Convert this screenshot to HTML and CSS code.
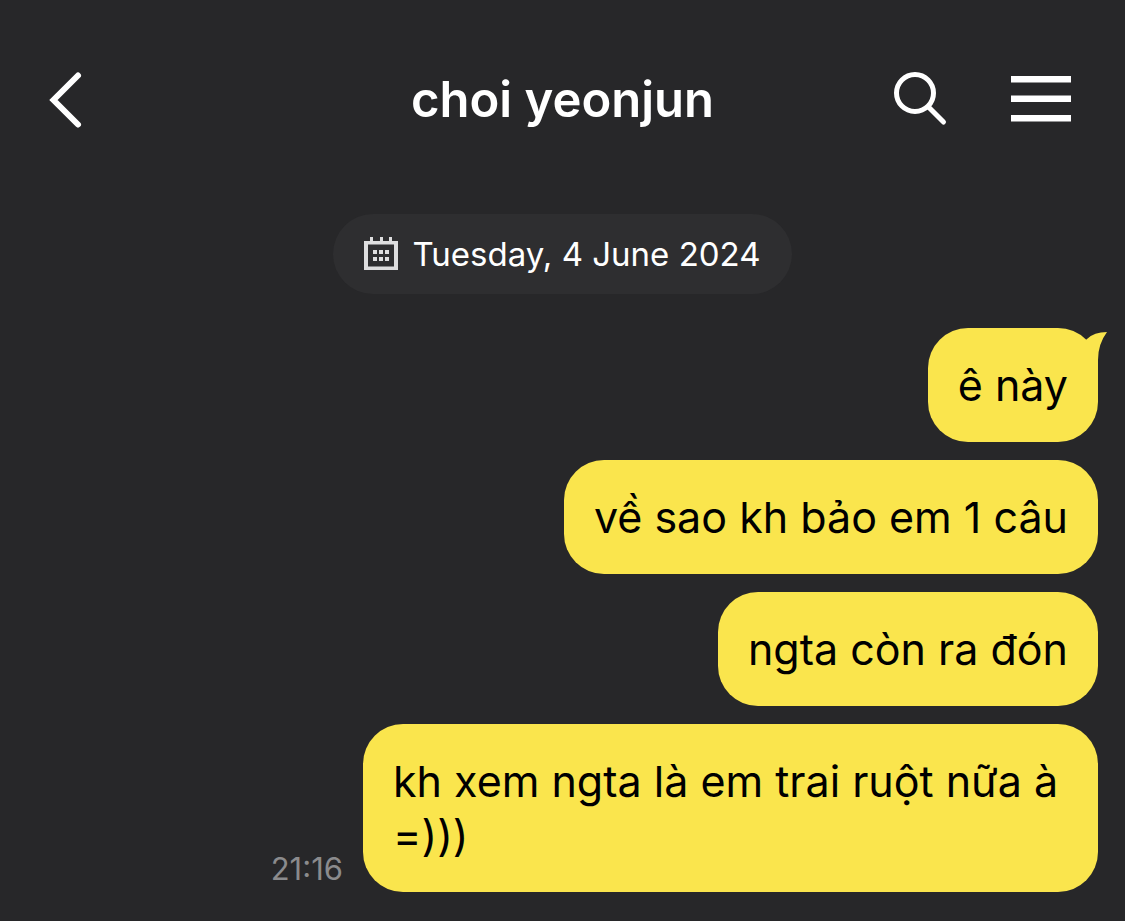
FILE: index.html
```html
<!DOCTYPE html>
<html lang="vi">
<head>
  <meta charset="utf-8">
  <meta name="viewport" content="width=device-width, initial-scale=1">
  <title>choi yeonjun</title>
  <link rel="stylesheet" href="styles.css">
</head>
<body>
  <header class="topbar">
    <button class="icon-button" type="button" aria-label="Back">
      <svg width="36" height="60" viewBox="0 0 36 60" fill="none" stroke="currentColor" stroke-width="6" stroke-linecap="round"><path d="M30 5.500 5.500 30 30 54.500"/></svg>
    </button>
    <h1 class="title">choi yeonjun</h1>
    <div class="actions">
      <button class="icon-button" type="button" aria-label="Search">
        <svg width="56" height="56" viewBox="0 0 56 56" fill="none" stroke="currentColor" stroke-width="5" stroke-linecap="round"><circle cx="22" cy="21" r="18.5"/><path d="M35.500 35 50.500 50"/></svg>
      </button>
      <button class="icon-button" type="button" aria-label="Menu">
        <svg width="60" height="48" viewBox="0 0 60 48" fill="currentColor"><path d="M0 0h60v6.500H0zM0 19.500h60V26H0zM0 39h60v6.500H0z"/></svg>
      </button>
    </div>
  </header>
  <main class="chat">
    <button class="date" type="button">
      <svg width="34" height="34" viewBox="0 0 34 34" fill="#dededf"><path fill-rule="evenodd" d="M0 4h6V0h3v4h7V0h3v4h6V0h3v4h6v29H0zM4 7.500v22h26v-22z"/><path d="M9 13h4v4H9zM15 13h4v4h-4zM21 13h4v4h-4zM9 20h4v4H9zM15 20h4v4h-4zM21 20h4v4h-4z"/></svg>
      <span>Tuesday, 4 June 2024</span>
    </button>
    <ol class="messages">
      <li class="message">
        <p class="bubble">ê này
          <svg class="tail" width="28" height="40" viewBox="0 0 28 40" fill="currentColor" aria-hidden="true"><path d="M0 40V14L8 7Q15 0 28 0 19 12 19 28V40z"/></svg>
        </p>
      </li>
      <li class="message"><p class="bubble">về sao kh bảo em 1 câu</p></li>
      <li class="message"><p class="bubble">ngta còn ra đón</p></li>
      <li class="message">
        <time class="time" datetime="2024-06-04T21:16">21:16</time>
        <p class="bubble">kh xem ngta là em trai ruột nữa à =)))</p>
      </li>
    </ol>
  </main>
</body>
</html>
```
FILE: styles.css
```css
* {
  box-sizing: border-box;
}

body {
  margin: 0;
  background: #272729;
  color: #fff;
  font-family: Inter, "Liberation Sans", sans-serif;
}

button {
  border: 0;
  padding: 0;
  background: none;
  color: inherit;
  font: inherit;
}

svg {
  display: block;
}

.topbar {
  display: grid;
  grid-template-columns: 1fr auto 1fr;
  align-items: center;
  padding: 70px 48px 84px;
}

.icon-button {
  justify-self: start;
}

.title {
  margin: 0;
  font-size: 49px;
  line-height: 60px;
  font-weight: 600;
}

.actions {
  display: flex;
  align-items: center;
  justify-content: flex-end;
  gap: 62px;
  padding-right: 6px;
}

.chat {
  display: flex;
  flex-direction: column;
  align-items: center;
  gap: 34px;
  padding: 0 27px 28px;
}

.date {
  display: flex;
  align-items: center;
  gap: 14px;
  padding: 20px 31px;
  border-radius: 40px;
  background: #2e2e30;
  font-size: 33px;
  line-height: 40px;
}

.messages {
  display: flex;
  flex-direction: column;
  gap: 18px;
  width: 100%;
  margin: 0;
  padding: 0;
  list-style: none;
}

.message {
  display: flex;
  align-items: flex-end;
  justify-content: flex-end;
  gap: 20px;
}

.bubble {
  position: relative;
  max-width: calc(100% - 336px);
  margin: 0;
  padding: 30px;
  border-radius: 40px;
  background: #fae54d;
  color: #000;
  font-size: 43px;
  line-height: 54px;
}

.tail {
  position: absolute;
  top: 4px;
  right: -9px;
  color: #fae54d;
}

.time {
  color: #8b8b8d;
  font-size: 31px;
  line-height: 46px;
}
```
